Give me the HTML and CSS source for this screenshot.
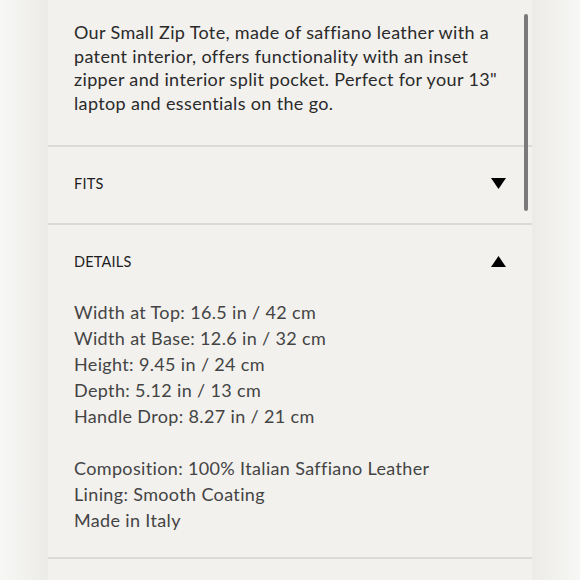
FILE: index.html
```html
<!DOCTYPE html>
<html>
<head>
<meta charset="utf-8">
<link rel="stylesheet" href="styles.css">
</head>
<body>
<div class="panel">
  <p class="desc">Our Small Zip Tote, made of saffiano leather with a patent interior, offers functionality with an inset zipper and interior split pocket. Perfect for your 13" laptop and essentials on the go.</p>
  <div class="row">
    <span class="title">FITS</span>
    <svg class="arrow" width="15" height="11" viewBox="0 0 15 11"><polygon points="0,0 15,0 7.5,11" fill="#000"/></svg>
  </div>
  <div class="row row-open">
    <span class="title">DETAILS</span>
    <svg class="arrow" width="15" height="11" viewBox="0 0 15 11"><polygon points="0,11 15,11 7.5,0" fill="#000"/></svg>
  </div>
  <div class="details">
    <div>Width at Top: 16.5 in / 42 cm</div>
    <div>Width at Base: 12.6 in / 32 cm</div>
    <div>Height: 9.45 in / 24 cm</div>
    <div>Depth: 5.12 in / 13 cm</div>
    <div>Handle Drop: 8.27 in / 21 cm</div>
    <div class="gap"></div>
    <div>Composition: 100% Italian Saffiano Leather</div>
    <div>Lining: Smooth Coating</div>
    <div>Made in Italy</div>
  </div>
  <div class="scrollbar"></div>
</div>
</body>
</html>
```
FILE: styles.css
```css
html, body {
  margin: 0;
  padding: 0;
  height: 580px;
  overflow: hidden;
}
body {
  background: linear-gradient(90deg, #f7f7f5 0px, #ecebe8 48px, #ecebe8 532px, #f7f7f5 580px);
  font-family: Lato, "Open Sans", sans-serif;
}
.panel {
  position: relative;
  width: 484px;
  height: 580px;
  margin: 0 auto;
  background: #f2f1ee;
  color: #333;
}
.desc {
  margin: 0;
  padding: 21px 26px 30px;
  font-size: 18px;
  letter-spacing: 0.35px;
  line-height: 23.5px;
  color: #2a2a2a;
}
.row {
  box-sizing: border-box;
  border-top: 2px solid #dcdad6;
  height: 78px;
  padding: 0 26px 4px;
  display: flex;
  align-items: center;
  justify-content: space-between;
}
.row-open {
  height: 76px;
  padding-bottom: 2px;
}
.title {
  font-size: 14.5px;
  color: #1e1e1e;
  letter-spacing: 0.2px;
}
.arrow {
  display: block;
}
.details {
  padding: 0 26px 24px;
  font-size: 18px;
  letter-spacing: 0.35px;
  line-height: 26px;
  color: #444;
  border-bottom: 2px solid #dcdad6;
}
.gap {
  height: 26px;
}
.scrollbar {
  position: absolute;
  left: 476px;
  top: 14px;
  width: 4px;
  height: 197px;
  border-radius: 2px;
  background: #7a7a7a;
}
```
